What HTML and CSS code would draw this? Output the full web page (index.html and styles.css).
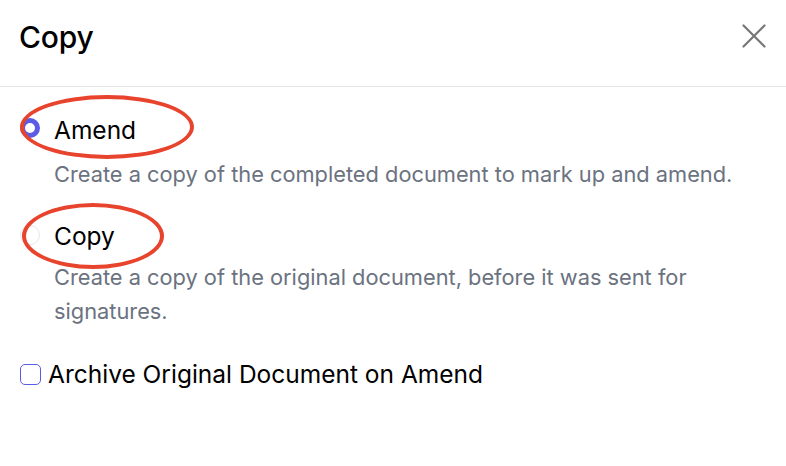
FILE: index.html
```html
<!DOCTYPE html>
<html>
<head>
<meta charset="utf-8">
<link rel="stylesheet" href="styles.css">
</head>
<body>
<div class="modal">
  <header class="head">
    <h1 class="title">Copy</h1>
    <button class="close" aria-label="Close">
      <svg width="24" height="24" viewBox="0 0 24 24"><path d="M1.5 1.5 L22.5 22.5 M22.5 1.5 L1.5 22.5" stroke="#777" stroke-width="2.2" fill="none" stroke-linecap="round"/></svg>
    </button>
  </header>
  <div class="body">
    <div class="option">
      <span class="radio checked"></span>
      <span class="label">Amend</span>
      <span class="mark mark1"></span>
    </div>
    <p class="desc d1">Create a copy of the completed document to mark up and amend.</p>
    <div class="option o2">
      <span class="radio"></span>
      <span class="label">Copy</span>
      <span class="mark mark2"></span>
    </div>
    <p class="desc d2">Create a copy of the original document, before it was sent for signatures.</p>
    <div class="check-row">
      <span class="checkbox"></span>
      <span class="check-label">Archive Original Document on Amend</span>
    </div>
  </div>
</div>
</body>
</html>
```

FILE: styles.css
```css
* { box-sizing: border-box; }
html, body { margin: 0; padding: 0; background: #fff; }
body { font-family: Inter, "Noto Sans", "Liberation Sans", sans-serif; color: #000; }

.modal { width: 786px; height: 466px; background: #fff; }

.head {
  height: 87px;
  border-bottom: 1px solid #e5e7eb;
  display: flex;
  justify-content: space-between;
  align-items: flex-start;
  padding: 19px 20px 0 19px;
}
.title { margin: 0; font-size: 30px; font-weight: 500; line-height: 36px; letter-spacing: -0.2px; }
.close { border: 0; background: none; padding: 0; margin: 5px 0 0 0; width: 24px; height: 24px; }
.close svg { display: block; }

.body { padding: 23px 20px 0 20px; }

.option { position: relative; display: flex; align-items: center; height: 36px; gap: 14px; }
.o2 { margin-top: 26px; }
.radio { width: 20px; height: 20px; border-radius: 50%; border: 1px solid #e5e7eb; background: #fff; flex: none; }
.radio.checked { border: 5.5px solid #5b5ce6; }
.label { font-size: 24.5px; line-height: 36px; padding-top: 3px; }
.o2 .label { padding-top: 1px; }

.mark { position: absolute; border: 4px solid #e8432d; border-radius: 50%; }
.mark1 { left: 0; top: -15px; width: 174px; height: 64px; }
.mark2 { left: 2px; top: -14px; width: 142px; height: 66px; }

.desc { margin: 0; padding-left: 34px; font-size: 21.8px; line-height: 34px; color: #6b7280; max-width: 720px; }
.d1 { margin-top: 11px; }
.d2 { margin-top: 7px; }

.check-row { display: flex; align-items: center; height: 36px; gap: 7px; margin-top: 28px; }
.checkbox { width: 21px; height: 21px; border: 1.5px solid #5b5ce6; border-radius: 5px; flex: none; }
.check-label { font-size: 24.5px; line-height: 36px; }
```
